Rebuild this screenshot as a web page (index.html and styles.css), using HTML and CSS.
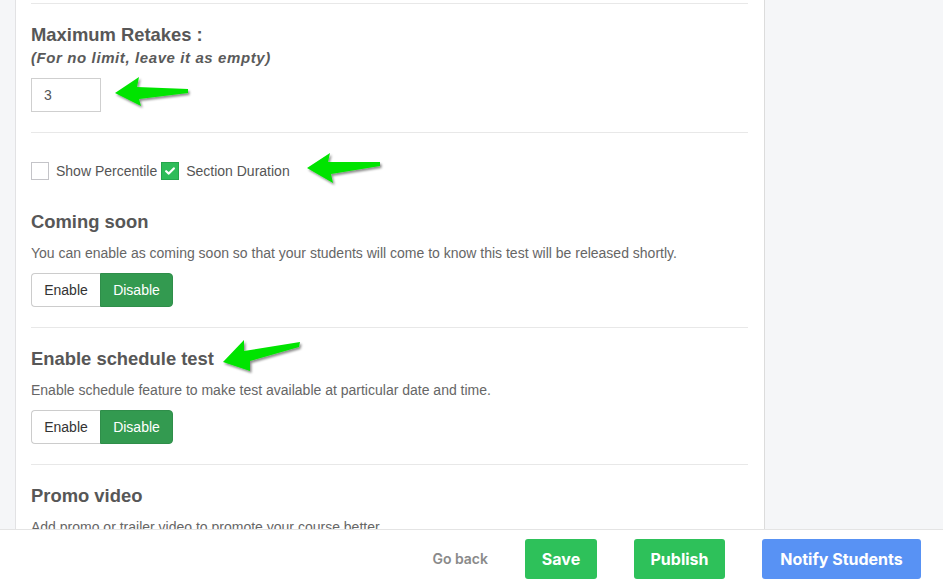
FILE: index.html
```html
<!DOCTYPE html>
<html>
<head>
<meta charset="utf-8">
<link rel="stylesheet" href="styles.css">
</head>
<body>
<div class="layout">
  <div class="rail"></div>
  <main class="panel">
    <section class="sec sec-first">
      <h2 class="title">Maximum Retakes :</h2>
      <p class="hint">(For no limit, leave it as empty)</p>
      <div class="input">3</div>
    </section>
    <section class="sec">
      <div class="checks">
        <span class="box"></span><span class="clabel">Show Percentile</span>
        <span class="box box-on"><svg width="10" height="8" viewBox="0 0 10 8"><path d="M1.2 4.2 L3.8 6.6 L8.8 1.4" fill="none" stroke="#fff" stroke-width="2.2" stroke-linecap="round" stroke-linejoin="round"/></svg></span><span class="clabel">Section Duration</span>
      </div>
      <h2 class="title title-gap">Coming soon</h2>
      <p class="desc">You can enable as coming soon so that your students will come to know this test will be released shortly.</p>
      <div class="toggle"><span class="tbtn">Enable</span><span class="tbtn tbtn-on">Disable</span></div>
    </section>
    <section class="sec">
      <h2 class="title">Enable schedule test</h2>
      <p class="desc">Enable schedule feature to make test available at particular date and time.</p>
      <div class="toggle"><span class="tbtn">Enable</span><span class="tbtn tbtn-on">Disable</span></div>
    </section>
    <section class="sec">
      <h2 class="title">Promo video</h2>
      <p class="desc">Add promo or trailer video to promote your course better.</p>
    </section>
  </main>
</div>
<footer class="footer">
  <span class="goback">Go back</span>
  <span class="fbtn fbtn-green">Save</span>
  <span class="fbtn fbtn-green fbtn-pub">Publish</span>
  <span class="fbtn fbtn-blue">Notify Students</span>
</footer>
<svg class="arrows" width="943" height="587" viewBox="0 0 943 587">
  <defs>
    <filter id="sh" x="-20%" y="-40%" width="150%" height="200%">
      <feDropShadow dx="1.5" dy="2" stdDeviation="1.3" flood-color="#000" flood-opacity="0.45"/>
    </filter>
  </defs>
  <g fill="#00e400" filter="url(#sh)">
    <polygon points="115,93 139,77 137,87 188,89 188,93 139,99 141,106"/>
    <polygon points="307,168 330,153 328,162 380,162 380,166 331,174 333,183"/>
    <polygon points="223,362 244,340 244,351 300,342 299,347 250,361 250,371"/>
  </g>
</svg>
</body>
</html>
```
FILE: styles.css
```css
* { box-sizing: border-box; }
html, body { margin: 0; padding: 0; }
body {
  background: #f5f6f8;
  font-family: "Liberation Sans", Arial, sans-serif;
  color: #555;
  overflow: hidden;
  height: 587px;
}
.layout { display: flex; align-items: stretch; min-height: 587px; }
.rail { width: 16px; border-right: 1px solid #e2e2e4; flex: none; }
.panel {
  width: 749px;
  flex: none;
  background: #fff;
  border-right: 1px solid #dcdcdc;
  padding: 3px 16px 0 15px;
}
.sec { border-top: 1px solid #e8e8e8; padding: 20px 0 20px; }
.title {
  margin: 0;
  font-size: 18.4px;
  line-height: 22px;
  font-weight: bold;
  color: #575757;
}
.title-gap { margin-top: 31px; }
.hint {
  margin: 2px 0 0;
  font-size: 15px;
  letter-spacing: 0.6px;
  line-height: 20px;
  font-weight: bold;
  font-style: italic;
  color: #5a5a5a;
}
.input {
  margin-top: 10px;
  width: 70px;
  height: 34px;
  border: 1px solid #cfcfcf;
  padding-left: 12px;
  font-size: 14px;
  line-height: 32px;
  color: #555;
}
.desc {
  margin: 10px 0 0;
  font-size: 14px;
  line-height: 20px;
  color: #666;
}
.toggle { display: flex; margin-top: 10px; }
.tbtn {
  height: 34px;
  font-size: 14px;
  line-height: 32px;
  text-align: center;
  border: 1px solid #ccc;
  color: #333;
  background: #fff;
}
.tbtn:first-child { width: 69px; border-radius: 4px 0 0 4px; border-right: none; }
.tbtn-on {
  width: 73px;
  background: #339a50;
  border-color: #2f8e4a;
  color: #fff;
  border-radius: 0 4px 4px 0;
}
.checks {
  display: flex;
  align-items: center;
  height: 20px;
  margin-top: 8px;
  margin-bottom: -1px;
}
.box {
  width: 18px;
  height: 18px;
  border: 1px solid #c4c4c8;
  background: #fff;
  display: flex;
  align-items: center;
  justify-content: center;
  flex: none;
}
.box-on { background: #2ebc59; border-color: #25a54c; margin-left: 4px; }
.clabel { font-size: 14px; color: #555; margin-left: 7px; }
.footer {
  position: fixed;
  left: 0;
  right: 0;
  bottom: 0;
  height: 58px;
  background: #fff;
  border-top: 1px solid #e4e4e4;
  display: flex;
  align-items: center;
  justify-content: flex-end;
  padding: 0 22px 0 0;
  font-family: Inter, "Liberation Sans", sans-serif;
}
.goback {
  font-size: 14px;
  font-weight: 600;
  color: #8a8a8a;
  margin-right: 37px;
}
.fbtn {
  height: 40px;
  line-height: 40px;
  border-radius: 3px;
  color: #fff;
  font-size: 16px;
  font-weight: 700;
  text-align: center;
  margin-left: 37px;
}
.goback + .fbtn { margin-left: 0; }
.fbtn-green { background: #2ec15a; width: 72px; }
.fbtn-pub { width: 91px; }
.fbtn-blue { background: #5892f4; width: 159px; }
.arrows { position: absolute; left: 0; top: 0; pointer-events: none; }
```
